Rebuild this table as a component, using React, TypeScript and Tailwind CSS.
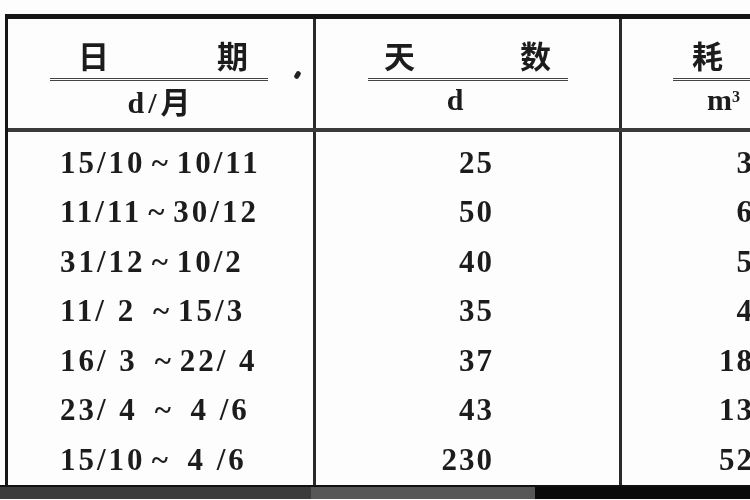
const rows = [
  { date: ["15/10", "10/11"], days: "25", use: "375" },
  { date: ["11/11", "30/12"], days: "50", use: "690" },
  { date: ["31/12", "10/2"], days: "40", use: "540" },
  { date: ["11/ 2 ", "15/3"], days: "35", use: "470" },
  { date: ["16/ 3 ", "22/ 4"], days: "37", use: "1850" },
  { date: ["23/ 4 ", " 4 /6"], days: "43", use: "1350" },
  { date: ["15/10", " 4 /6"], days: "230", use: "5275" },
];

const serif = "font-['Liberation_Serif',serif]";
const cjk = "font-['Noto_Sans_CJK_SC',sans-serif]";

export default function App() {
  return (
    <div className="w-[750px] h-[500px] overflow-hidden bg-[#fdfdfd] pt-[14px] text-[#1c1c1c]">
      <div className="w-[900px] ml-[5px] border-l-[3px] border-t-[5px] border-[#151515] blur-[0.4px]">
        {/* header */}
        <div className="grid grid-cols-[308px_306px_1fr] h-[113px] border-b-[4px] border-[#3a3a3a]">
          <div className="relative border-r-[3px] border-[#2a2a2a] pl-[42px] pt-[18px]">
            <div className="w-[218px]">
              <div className={`flex justify-between pl-[28px] pr-[20px] text-[31px] leading-[36px] font-bold ${cjk}`}>
                <span>日</span>
                <span>期</span>
              </div>
              <div className="mt-[5px] h-[3px] border-t-[1px] border-b-[1px] border-[#444]" />
              <div className={`mt-[3px] text-center text-[30px] leading-[32px] font-bold ${serif}`}>
                d<span className="mx-[4px]">/</span><span className={cjk}>月</span>
              </div>
            </div>
            <span className="absolute left-[287px] top-[52px] w-[5px] h-[8px] rotate-[30deg] rounded-full bg-[#222]" />
          </div>
          <div className="border-r-[3px] border-[#2a2a2a] pl-[52px] pt-[18px]">
            <div className="w-[200px]">
              <div className={`flex justify-between pl-[16px] pr-[17px] text-[31px] leading-[36px] font-bold ${cjk}`}>
                <span>天</span>
                <span>数</span>
              </div>
              <div className="mt-[5px] h-[3px] border-t-[1px] border-b-[1px] border-[#444]" />
              <div className={`mt-[3px] pr-[26px] text-center text-[30px] leading-[32px] font-bold ${serif}`}>d</div>
            </div>
          </div>
          <div className="pl-[51px] pt-[18px]">
            <div className="w-[160px]">
              <div className={`pl-[19px] text-[31px] leading-[36px] font-bold ${cjk}`}>耗</div>
              <div className="mt-[5px] h-[3px] border-t-[1px] border-b-[1px] border-[#444]" />
              <div className={`mt-[3px] pl-[34px] text-[30px] leading-[32px] font-bold ${serif}`}>
                m<sup className="text-[16px]">3</sup>
              </div>
            </div>
          </div>
        </div>

        {/* body */}
        <div className={`grid grid-cols-[308px_306px_1fr] ${serif} font-bold text-[31px]`}>
          <div className="border-r-[3px] border-[#2a2a2a] pt-[6px] pl-[52px] tracking-[3px]">
            {rows.map((r, i) => (
              <div key={i} className="h-[49.5px] flex items-center whitespace-pre">
                {r.date[0]}
                <span className="mx-[6px]">~</span>
                {r.date[1]}
              </div>
            ))}
          </div>
          <div className="border-r-[3px] border-[#2a2a2a] pt-[6px] pr-[125px] tracking-[2px]">
            {rows.map((r, i) => (
              <div key={i} className="h-[49.5px] flex items-center justify-end">
                {r.days}
              </div>
            ))}
          </div>
          <div className="pt-[6px] pr-[116px] tracking-[2px]">
            {rows.map((r, i) => (
              <div key={i} className="h-[49.5px] flex items-center justify-end">
                {r.use}
              </div>
            ))}
          </div>
        </div>
      </div>

      {/* scan edge at the bottom */}
      <div className="flex h-[14px] border-t-[2px] border-[#111]">
        <div className="w-[311px] bg-[#3b3b3b]" />
        <div className="w-[224px] bg-[#575757]" />
        <div className="flex-1 bg-[#0b0b0b]" />
      </div>
    </div>
  );
}
